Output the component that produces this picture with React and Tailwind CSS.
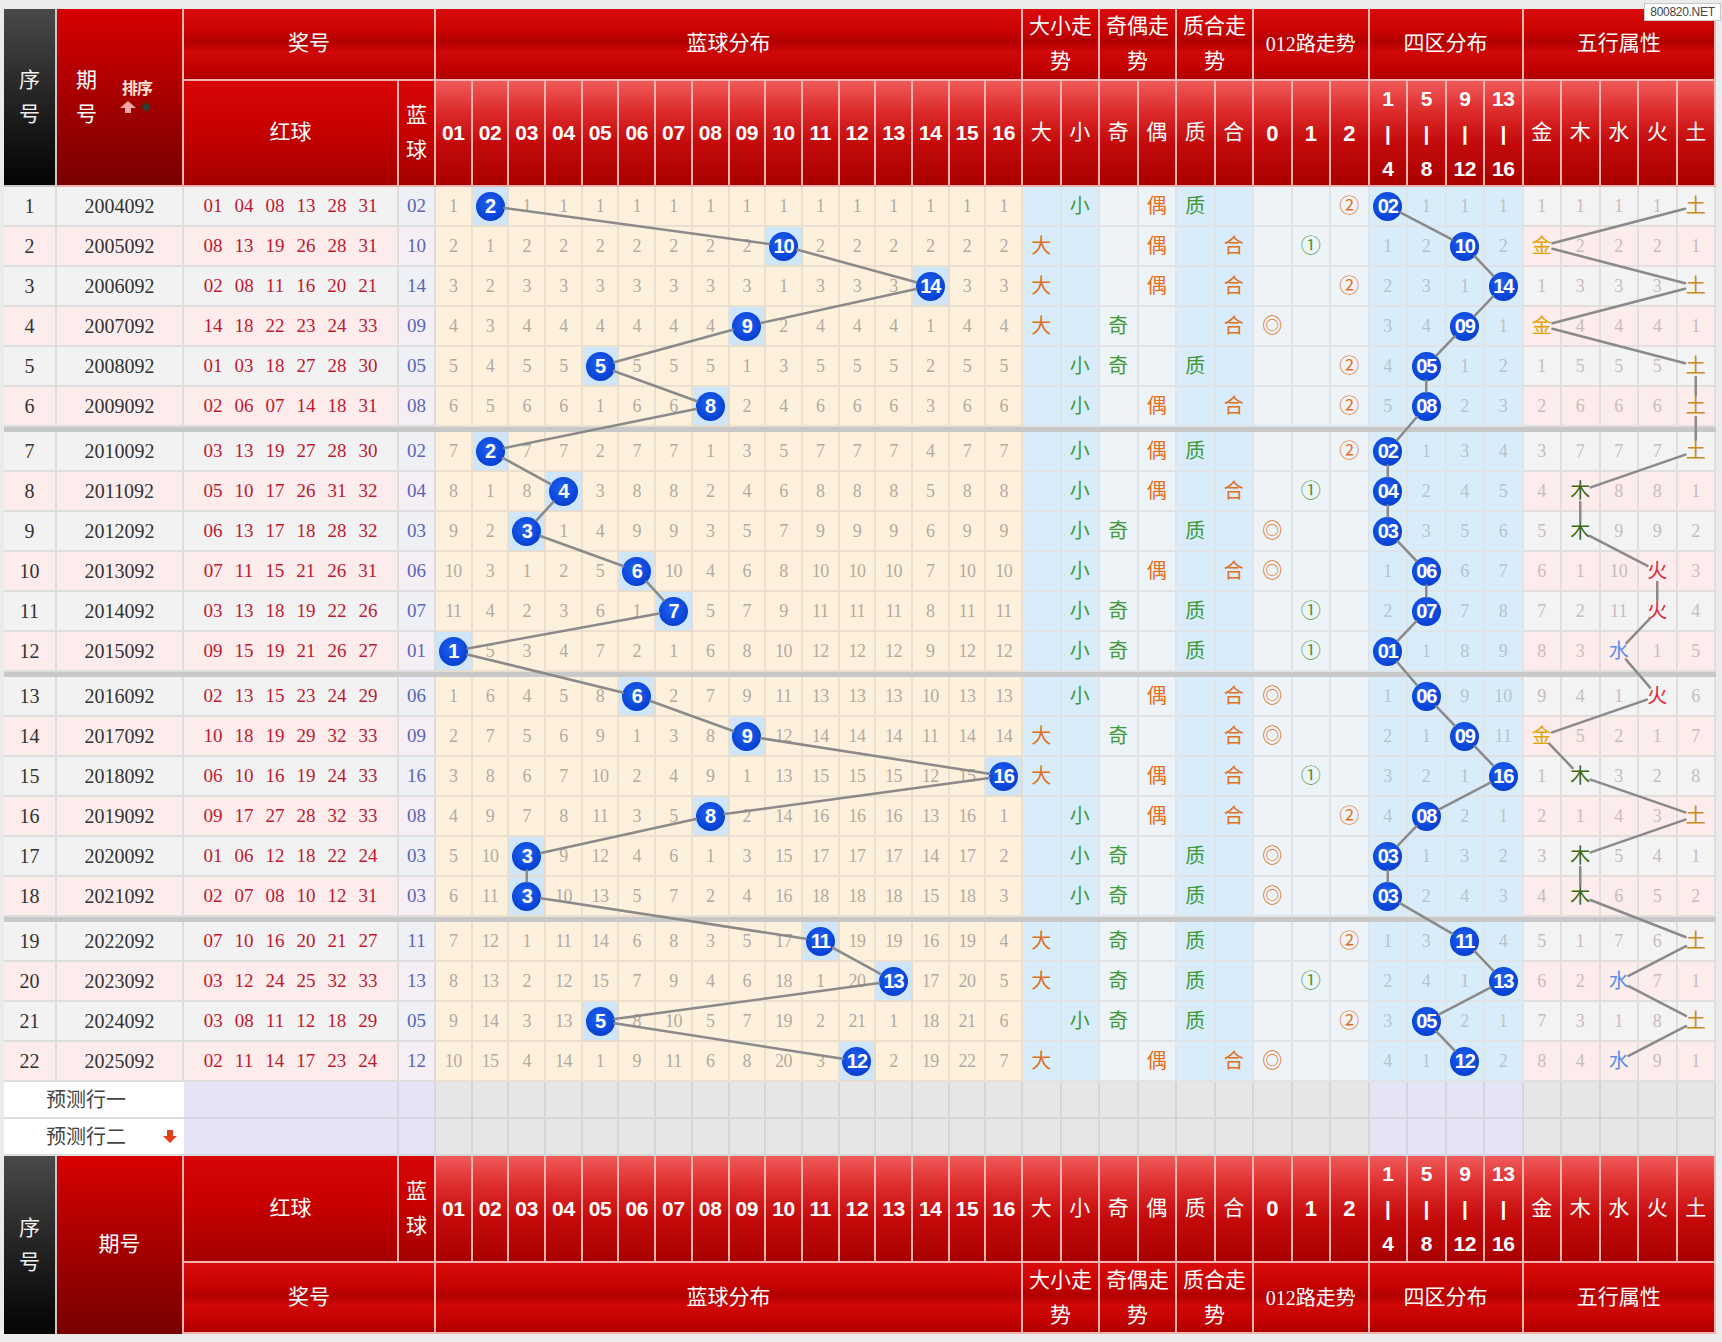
import React from "react";

const W = [53, 127, 215, 37, ...Array(16).fill(36.6875), ...Array(18).fill(38.5)];
const L = [];
{
  let acc = 0;
  for (const w of W) {
    L.push(acc);
    acc += w;
  }
}
const cx = (c) => L[c] + (W[c] - 2) / 2;
const cy = (i) => i * 40 + Math.floor(i / 6) * 5 + 19;

const GRID = "grid grid-cols-[53px_127px_215px_37px_repeat(16,36.6875px)_repeat(18,38.5px)]";

const RAW = [
  ["2004092", "01 04 08 13 28 31", 2],
  ["2005092", "08 13 19 26 28 31", 10],
  ["2006092", "02 08 11 16 20 21", 14],
  ["2007092", "14 18 22 23 24 33", 9],
  ["2008092", "01 03 18 27 28 30", 5],
  ["2009092", "02 06 07 14 18 31", 8],
  ["2010092", "03 13 19 27 28 30", 2],
  ["2011092", "05 10 17 26 31 32", 4],
  ["2012092", "06 13 17 18 28 32", 3],
  ["2013092", "07 11 15 21 26 31", 6],
  ["2014092", "03 13 18 19 22 26", 7],
  ["2015092", "09 15 19 21 26 27", 1],
  ["2016092", "02 13 15 23 24 29", 6],
  ["2017092", "10 18 19 29 32 33", 9],
  ["2018092", "06 10 16 19 24 33", 16],
  ["2019092", "09 17 27 28 32 33", 8],
  ["2020092", "01 06 12 18 22 24", 3],
  ["2021092", "02 07 08 10 12 31", 3],
  ["2022092", "07 10 16 20 21 27", 11],
  ["2023092", "03 12 24 25 32 33", 13],
  ["2024092", "03 08 11 12 18 29", 5],
  ["2025092", "02 11 14 17 23 24", 12],
];

// 金0 木1 水2 火3 土4
const ELEM = { 1: 2, 2: 4, 3: 1, 4: 1, 5: 4, 6: 3, 7: 3, 8: 4, 9: 0, 10: 0, 11: 4, 12: 2, 13: 2, 14: 4, 15: 0, 16: 1 };
const ELEM_NAMES = ["金", "木", "水", "火", "土"];
const ELEM_COLORS = ["text-[#e2a300]", "text-[#3d6814]", "text-[#5b8ee6]", "text-[#e2283c]", "text-[#c98a1e]"];
const PRIME = new Set([1, 2, 3, 5, 7, 11, 13]);

const DATA = (() => {
  const bm = Array(16).fill(0);
  const zm = Array(4).fill(0);
  const em = Array(5).fill(0);
  return RAW.map(([issue, reds, blue], i) => {
    const blueCells = bm.map((v, k) => {
      if (k === blue - 1) {
        bm[k] = 0;
        return 0;
      }
      bm[k] = v + 1;
      return bm[k];
    });
    const z = Math.floor((blue - 1) / 4);
    const zoneCells = zm.map((v, k) => {
      if (k === z) {
        zm[k] = 0;
        return 0;
      }
      zm[k] = v + 1;
      return zm[k];
    });
    const e = ELEM[blue];
    const elemCells = em.map((v, k) => {
      if (k === e) {
        em[k] = 0;
        return 0;
      }
      em[k] = v + 1;
      return em[k];
    });
    const big = blue >= 9;
    const odd = blue % 2 === 1;
    const prime = PRIME.has(blue);
    const r = blue % 3;
    const trend = [
      big ? { t: "大", c: "text-[#e0701c]" } : null,
      !big ? { t: "小", c: "text-[#3f9a3a]" } : null,
      odd ? { t: "奇", c: "text-[#3f9a3a]" } : null,
      !odd ? { t: "偶", c: "text-[#e0701c]" } : null,
      prime ? { t: "质", c: "text-[#3f9a3a]" } : null,
      !prime ? { t: "合", c: "text-[#e0701c]" } : null,
      r === 0 ? { t: "◎", c: "text-[#e0701c]" } : null,
      r === 1 ? { t: "①", c: "text-[#3f9a3a]" } : null,
      r === 2 ? { t: "②", c: "text-[#e0701c]" } : null,
    ];
    return { seq: i + 1, issue, reds: reds.split(" "), blue, blueCells, zoneCells, elemCells, z, e, trend };
  });
})();

const BAND =
  "bg-[linear-gradient(180deg,#da0c0c_0%,#c80202_32%,#b20000_47%,#d00808_62%,#c20000_85%,#b00000_100%)]";
const LIGHT = "bg-[linear-gradient(180deg,#f05a5a_0%,#dc2a2a_30%,#c40a0a_60%,#a90000_100%)]";
const MID = "bg-[linear-gradient(180deg,#d80606_0%,#c80000_45%,#a40000_100%)]";

function Ball({ children }) {
  return (
    <div className="w-[29px] h-[29px] rounded-full bg-[radial-gradient(circle_at_45%_40%,#2262f0_0%,#0a45d8_60%,#0636b8_100%)] text-white font-bold flex items-center justify-center text-[20px] tracking-[-1px] leading-none font-['Liberation_Sans',sans-serif]">
      {children}
    </div>
  );
}

const HC = "flex items-center justify-center text-center border-r-2 border-b-2 border-[#f2b2b2] text-white";

function GroupHeaders() {
  return (
    <>
      <div className={`${HC} ${BAND} col-span-2 text-[21px]`}>奖号</div>
      <div className={`${HC} ${BAND} col-span-16 text-[21px]`}>蓝球分布</div>
      <div className={`${HC} ${BAND} col-span-2 text-[21px] leading-[35px]`}>
        大小走
        <br />势
      </div>
      <div className={`${HC} ${BAND} col-span-2 text-[21px] leading-[35px]`}>
        奇偶走
        <br />势
      </div>
      <div className={`${HC} ${BAND} col-span-2 text-[21px] leading-[35px]`}>
        质合走
        <br />势
      </div>
      <div className={`${HC} ${BAND} col-span-3 text-[20px]`}>012路走势</div>
      <div className={`${HC} ${BAND} col-span-4 text-[21px]`}>四区分布</div>
      <div className={`${HC} ${BAND} col-span-5 text-[21px]`}>五行属性</div>
    </>
  );
}

function ColumnHeaders() {
  const nums = Array.from({ length: 16 }, (_, k) => String(k + 1).padStart(2, "0"));
  return (
    <>
      <div className={`${HC} ${MID} text-[21px]`}>红球</div>
      <div className={`${HC} ${MID} flex-col text-[21px] leading-[35px]`}>
        <span>蓝</span>
        <span>球</span>
      </div>
      {nums.map((n) => (
        <div key={n} className={`${HC} ${LIGHT} text-[21px] font-bold font-['Liberation_Sans',sans-serif] tracking-[-0.3px]`}>
          {n}
        </div>
      ))}
      {["大", "小", "奇", "偶", "质", "合"].map((t) => (
        <div key={t} className={`${HC} ${LIGHT} text-[21px]`}>
          {t}
        </div>
      ))}
      {["0", "1", "2"].map((t) => (
        <div key={t} className={`${HC} ${LIGHT} text-[22px] font-bold font-['Liberation_Sans',sans-serif]`}>
          {t}
        </div>
      ))}
      {[
        ["1", "4"],
        ["5", "8"],
        ["9", "12"],
        ["13", "16"],
      ].map(([a, b]) => (
        <div key={a} className={`${HC} ${LIGHT} flex-col text-[21px] leading-[35px] font-bold font-['Liberation_Sans',sans-serif] tracking-[-0.5px]`}>
          <span>{a}</span>
          <span>|</span>
          <span>{b}</span>
        </div>
      ))}
      {ELEM_NAMES.map((t) => (
        <div key={t} className={`${HC} ${LIGHT} text-[21px]`}>
          {t}
        </div>
      ))}
    </>
  );
}

function TopHeader() {
  return (
    <div className={`${GRID} grid-rows-[72px_106px]`}>
      <div className="row-span-2 flex flex-col items-center justify-center border-r-2 border-b-2 border-[#c8c8c8] bg-linear-to-b from-[#4a4a4a] to-[#050505] text-[#f0f0f0] text-[21px] leading-[34px]">
        <span>序</span>
        <span>号</span>
      </div>
      <div className="row-span-2 flex items-center border-r-2 border-b-2 border-[#f2b2b2] bg-linear-to-b from-[#d80000] to-[#780000] text-white text-[21px]">
        <div className="flex flex-col leading-[34px] ml-[19px]">
          <span>期</span>
          <span>号</span>
        </div>
        <div className="ml-[23px] flex flex-col items-center gap-[4px]">
          <span className="text-[16px] font-bold text-[#ffe2d6] leading-none tracking-[-1px]">排序</span>
          <svg width="34" height="12" viewBox="0 0 34 12">
            <polygon points="8,0 16,7 11,7 11,12 5,12 5,7 0,7" fill="#f0a4a4" />
            <polygon points="26,1 31,6 26,11 21,6" fill="#2d3d2f" />
          </svg>
        </div>
      </div>
      <GroupHeaders />
      <ColumnHeaders />
    </div>
  );
}

function BottomHeader() {
  return (
    <div className={`${GRID} grid-rows-[107px_71px]`}>
      <div className="row-span-2 flex flex-col items-center justify-center border-r-2 border-[#c8c8c8] bg-linear-to-b from-[#4a4a4a] to-[#050505] text-[#f0f0f0] text-[21px] leading-[34px]">
        <span>序</span>
        <span>号</span>
      </div>
      <div className="row-span-2 flex items-center justify-center border-r-2 border-[#f2b2b2] bg-linear-to-b from-[#d80000] to-[#780000] text-white text-[21px]">
        期号
      </div>
      <ColumnHeaders />
      <GroupHeaders />
    </div>
  );
}

const DC = "flex items-center justify-center border-r-2 border-b-2";

function DataRow({ d, i }) {
  const ev = i % 2 === 1;
  const base = ev ? "bg-[#fcecec]" : "bg-[#f2f2f2]";
  const trendBg = [
    "bg-[#d8ecfa]",
    "bg-[#d8ecfa]",
    "bg-[#edf3f6]",
    "bg-[#edf3f6]",
    "bg-[#d8ecfa]",
    "bg-[#d8ecfa]",
    "bg-[#edf3f6]",
    "bg-[#edf3f6]",
    "bg-[#edf3f6]",
  ];
  return (
    <div className={`${GRID} h-[40px]`}>
      <div className={`${DC} ${base} border-[#dedede] text-[20px] text-[#333]`}>{d.seq}</div>
      <div className={`${DC} ${base} border-[#dedede] text-[20px] text-[#333]`}>{d.issue}</div>
      <div className={`${DC} ${base} border-[#dedede] gap-[12px] text-[19px] text-[#c01830]`}>
        {d.reds.map((r, k) => (
          <span key={k}>{r}</span>
        ))}
      </div>
      <div className={`${DC} ${ev ? "bg-[#f6eef5]" : "bg-[#eef0f6]"} border-[#dedede] text-[19px] text-[#5866b4]`}>
        {String(d.blue).padStart(2, "0")}
      </div>
      {d.blueCells.map((v, k) =>
        v === 0 ? (
          <div key={k} className={`${DC} bg-[#cfe5fa] border-[#e6dccd]`}>
            <Ball>{k + 1}</Ball>
          </div>
        ) : (
          <div key={k} className={`${DC} bg-[#fdf1de] border-[#ebe0cf] text-[18px] text-[#b4aa9e] tracking-[-0.5px]`}>
            {v}
          </div>
        )
      )}
      {d.trend.map((t, k) => (
        <div key={k} className={`${DC} ${trendBg[k]} border-[#dfe4e8] text-[20px]`}>
          {t ? <span className={t.c}>{t.t}</span> : null}
        </div>
      ))}
      {d.zoneCells.map((v, k) =>
        v === 0 ? (
          <div key={k} className={`${DC} bg-[#d8ecfa] border-[#dfe4e8]`}>
            <Ball>{String(d.blue).padStart(2, "0")}</Ball>
          </div>
        ) : (
          <div key={k} className={`${DC} bg-[#d8ecfa] border-[#dfe4e8] text-[18px] text-[#b8c3cc]`}>
            {v}
          </div>
        )
      )}
      {d.elemCells.map((v, k) =>
        v === 0 ? (
          <div key={k} className={`${DC} ${ev ? "bg-[#fcecec]" : "bg-[#f3f3f3]"} border-[#e2dede] text-[20px]`}>
            <span className={ELEM_COLORS[k]}>{ELEM_NAMES[k]}</span>
          </div>
        ) : (
          <div key={k} className={`${DC} ${ev ? "bg-[#fcecec]" : "bg-[#f3f3f3]"} border-[#e2dede] text-[18px] text-[#c8bcbc]`}>
            {v}
          </div>
        )
      )}
    </div>
  );
}

function seg(x1, y1, x2, y2, r1, r2) {
  const dx = x2 - x1;
  const dy = y2 - y1;
  const len = Math.hypot(dx, dy);
  return [x1 + (dx * r1) / len, y1 + (dy * r1) / len, x2 - (dx * r2) / len, y2 - (dy * r2) / len];
}

function Lines() {
  const lines = [];
  for (let i = 0; i < DATA.length - 1; i++) {
    const a = DATA[i];
    const b = DATA[i + 1];
    lines.push(seg(cx(4 + a.blue - 1), cy(i), cx(4 + b.blue - 1), cy(i + 1), 14.5, 14.5));
    lines.push(seg(cx(29 + a.z), cy(i), cx(29 + b.z), cy(i + 1), 14.5, 14.5));
    lines.push(seg(cx(33 + a.e), cy(i), cx(33 + b.e), cy(i + 1), 11, 11));
  }
  return (
    <svg className="absolute left-0 top-0 pointer-events-none" width="1712" height="895">
      {lines.map(([x1, y1, x2, y2], k) => (
        <line key={k} x1={x1} y1={y1} x2={x2} y2={y2} stroke="#8a8a8a" strokeWidth="2.5" strokeLinecap="round" />
      ))}
    </svg>
  );
}

function DataArea() {
  const out = [];
  DATA.forEach((d, i) => {
    out.push(<DataRow key={i} d={d} i={i} />);
    if (i === 5 || i === 11 || i === 17) out.push(<div key={`s${i}`} className="h-[5px] bg-[#c8c8c8]" />);
  });
  return (
    <div className="relative">
      {out}
      <Lines />
    </div>
  );
}

function Predict({ label, arrow }) {
  const gray = "border-r-2 border-b-2 border-[#d6d6d6] bg-[#e6e6e6]";
  const lav = "border-r-2 border-b-2 border-[#d6d6e2] bg-[#e4e4f4]";
  return (
    <div className={`${GRID} h-[37px]`}>
      <div className="col-span-2 relative flex items-center pl-[42px] bg-white border-b-2 border-[#dedede] text-[20px] text-[#444]">
        {label}
        {arrow ? (
          <svg className="absolute left-[159px] top-[11px]" width="14" height="13" viewBox="0 0 14 13">
            <polygon points="4,0 10,0 10,6 14,6 7,13 0,6 4,6" fill="#e0401a" />
          </svg>
        ) : null}
      </div>
      <div className={lav} />
      <div className={lav} />
      {Array.from({ length: 16 }).map((_, k) => (
        <div key={`b${k}`} className={gray} />
      ))}
      {Array.from({ length: 9 }).map((_, k) => (
        <div key={`t${k}`} className={gray} />
      ))}
      {Array.from({ length: 4 }).map((_, k) => (
        <div key={`z${k}`} className={lav} />
      ))}
      {Array.from({ length: 5 }).map((_, k) => (
        <div key={`e${k}`} className={gray} />
      ))}
    </div>
  );
}

export default function App() {
  return (
    <div className="relative w-[1722px] h-[1342px] overflow-hidden bg-[#ebebeb] pt-[9px] pl-[4px] font-['Liberation_Serif','Noto_Sans_CJK_SC',serif]">
      <div className="w-[1712px]">
        <TopHeader />
        <DataArea />
        <Predict label="预测行一" />
        <Predict label="预测行二" arrow />
        <BottomHeader />
      </div>
      <div className="absolute right-[1px] top-[3px] w-[77px] h-[18px] bg-white border border-[#c8c8c8] flex items-center justify-center text-[12px] text-[#444] tracking-[-0.3px] font-['Liberation_Sans',sans-serif]">
        800820.NET
      </div>
    </div>
  );
}
